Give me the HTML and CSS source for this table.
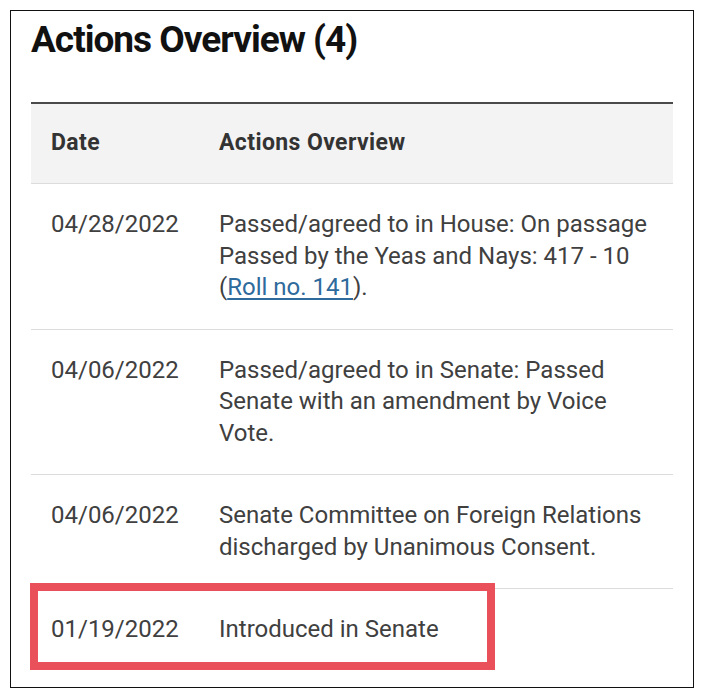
FILE: index.html
```html
<!DOCTYPE html>
<html>
<head>
<meta charset="utf-8">
<link rel="stylesheet" href="styles.css">
</head>
<body>
<div class="frame">
  <h2 class="title">Actions Overview (4)</h2>
  <table class="actions">
    <thead>
      <tr><th class="col-date">Date</th><th>Actions Overview</th></tr>
    </thead>
    <tbody>
      <tr><td class="col-date">04/28/2022</td><td>Passed/agreed to in House: On passage Passed by the Yeas and Nays: 417 - 10 (<a href="#">Roll no. 141</a>).</td></tr>
      <tr><td class="col-date">04/06/2022</td><td>Passed/agreed to in Senate: Passed Senate with an amendment by Voice Vote.</td></tr>
      <tr><td class="col-date">04/06/2022</td><td>Senate Committee on Foreign Relations discharged by Unanimous Consent.</td></tr>
      <tr class="last"><td class="col-date">01/19/2022</td><td>Introduced in Senate</td></tr>
    </tbody>
  </table>
  <div class="highlight"></div>
</div>
</body>
</html>
```
FILE: styles.css
```css
html, body {
  margin: 0;
  padding: 0;
  background: #fff;
}
body {
  font-family: Roboto, "Liberation Sans", sans-serif;
  color: #404040;
}
.frame {
  position: relative;
  margin: 10px 0 0 10px;
  border: 1px solid #111;
  padding: 7px 20px 0 20px;
  box-sizing: border-box;
  width: 684px;
  height: 678px;
  overflow: hidden;
}
.title {
  margin: 0;
  font-size: 37px;
  line-height: 44px;
  letter-spacing: -1px;
  font-weight: 700;
  color: #111;
}
.actions {
  margin-top: 40px;
  width: 642px;
  border-collapse: collapse;
  border-top: 2px solid #4a4a4a;
}
.actions th {
  background: #f3f3f3;
  text-align: left;
  font-size: 23px;
  line-height: 30px;
  letter-spacing: 0.4px;
  font-weight: 700;
  color: #333;
  padding: 24px 20px 25px 0;
  border-bottom: 1px solid #dcdcdc;
}
.actions td {
  font-size: 24px;
  line-height: 31.5px;
  padding: 25px 20px 25px 0;
  vertical-align: top;
  border-bottom: 1px solid #dcdcdc;
}
.actions tr.last td {
  border-bottom: none;
}
.actions .col-date {
  width: 168px;
  padding-left: 20px;
  padding-right: 0;
}
.actions a {
  color: #2e6a9c;
  text-decoration: underline;
  text-underline-offset: 3px;
}
.highlight {
  position: absolute;
  left: 19px;
  top: 572px;
  width: 465px;
  height: 87px;
  box-sizing: border-box;
  border: 8px solid #e9505a;
}
```
